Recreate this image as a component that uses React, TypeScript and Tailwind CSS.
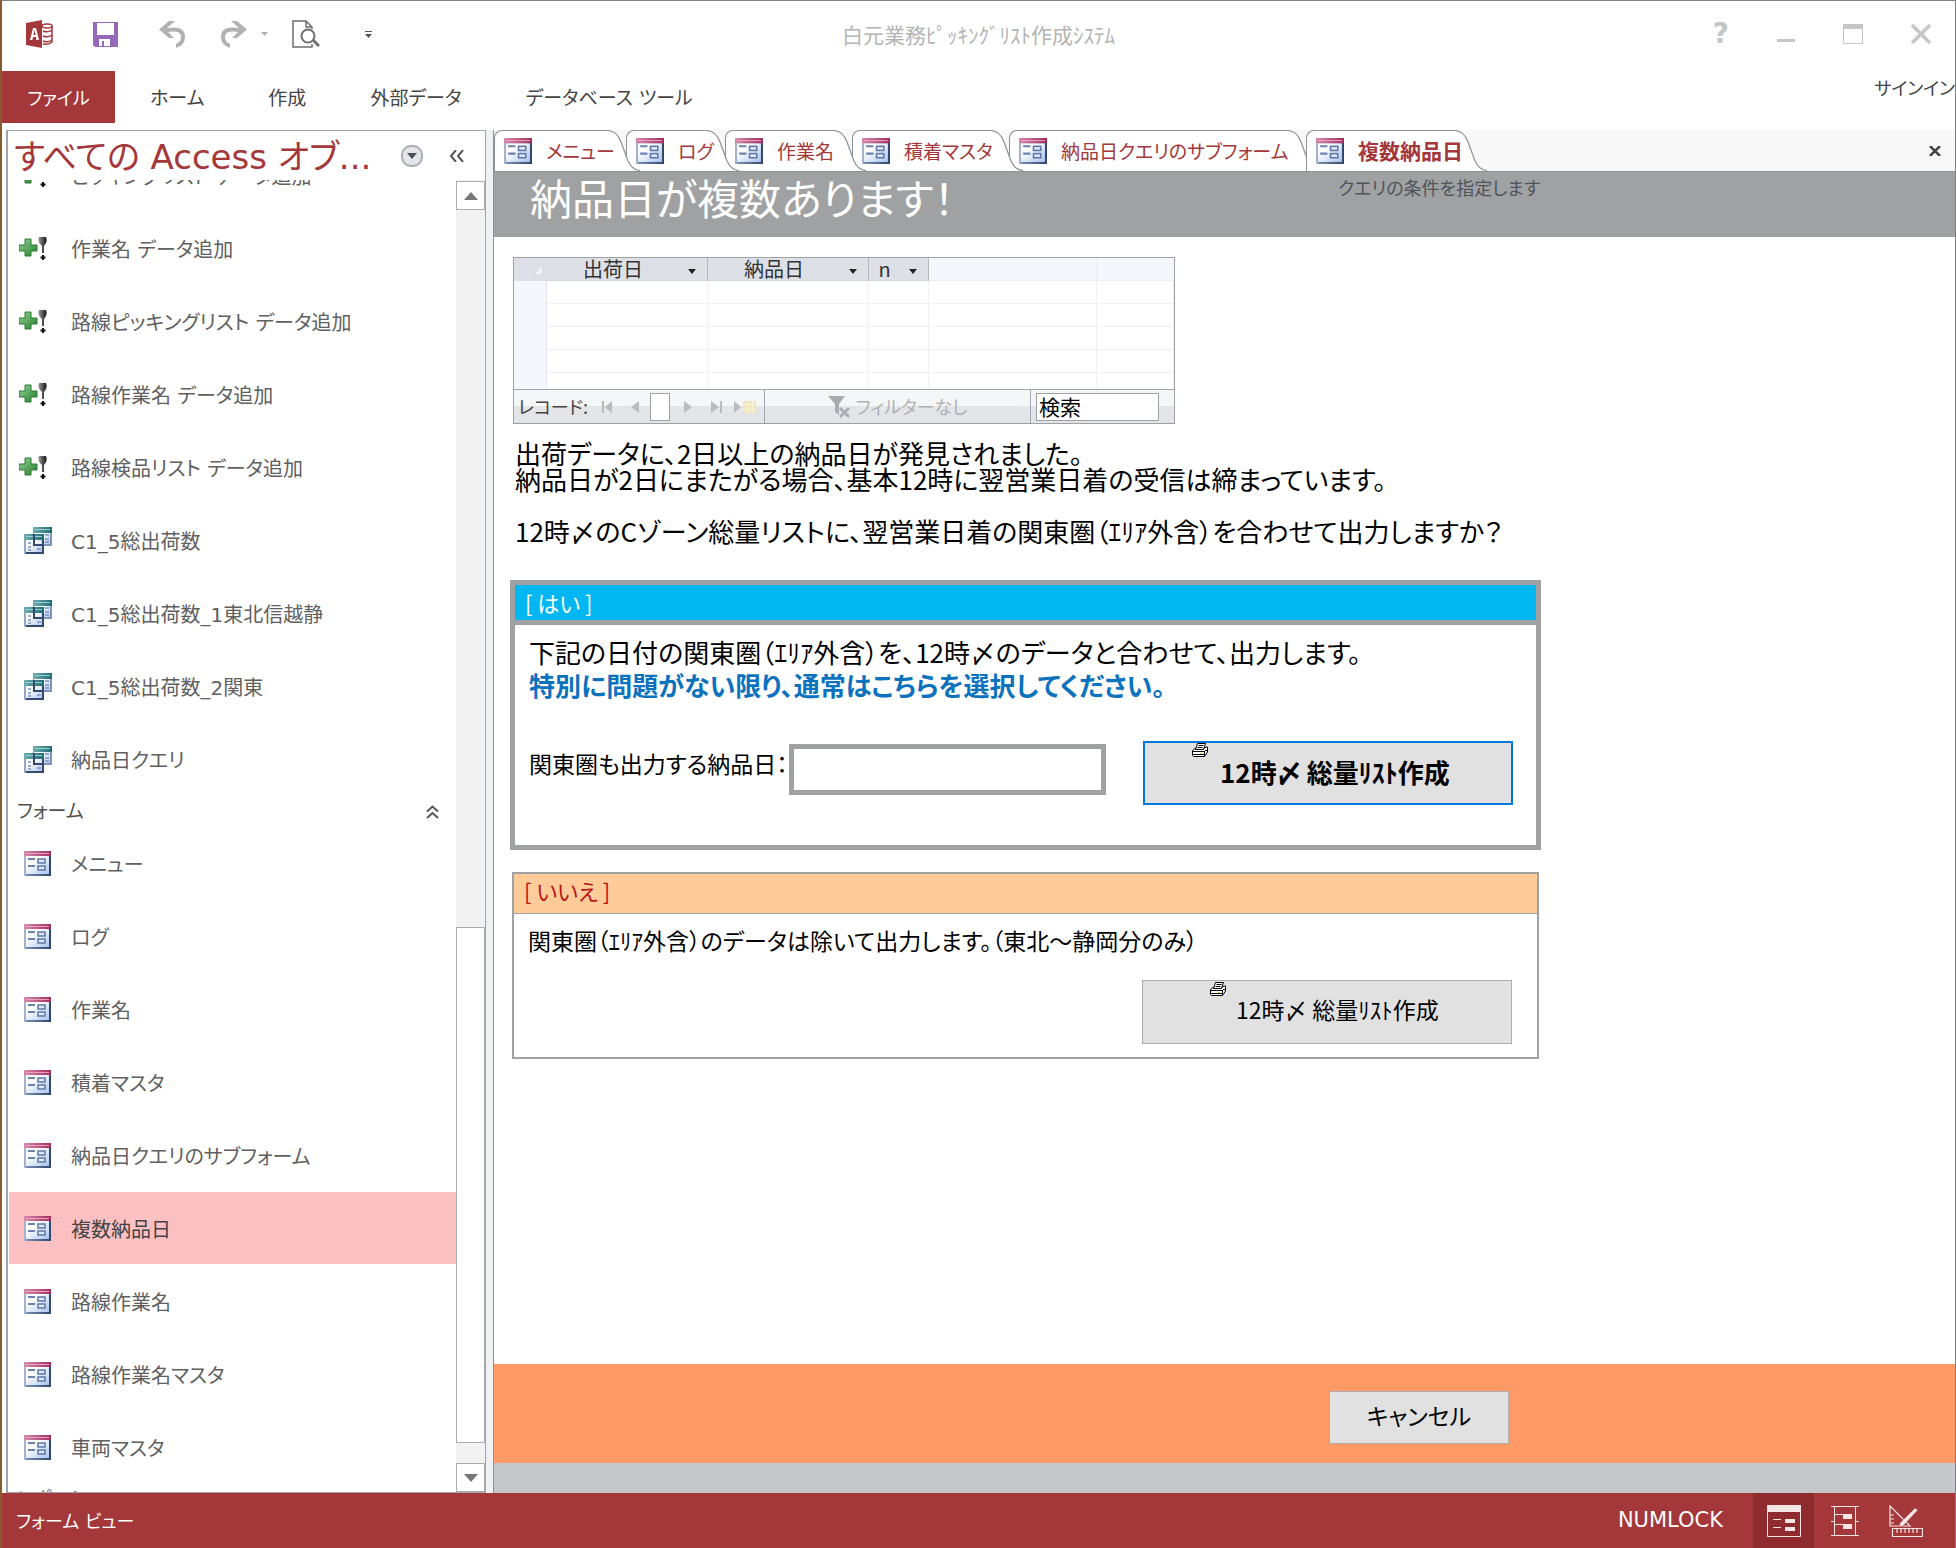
import React from 'react';

type IconKind = 'append' | 'query' | 'form';

const queries: { name: string; icon: IconKind }[] = [
  { name: 'ピッキングリスト データ追加', icon: 'append' },
  { name: '作業名 データ追加', icon: 'append' },
  { name: '路線ピッキングリスト データ追加', icon: 'append' },
  { name: '路線作業名 データ追加', icon: 'append' },
  { name: '路線検品リスト データ追加', icon: 'append' },
  { name: 'C1_5総出荷数', icon: 'query' },
  { name: 'C1_5総出荷数_1東北信越静', icon: 'query' },
  { name: 'C1_5総出荷数_2関東', icon: 'query' },
  { name: '納品日クエリ', icon: 'query' },
];

const forms = [
  'メニュー',
  'ログ',
  '作業名',
  '積着マスタ',
  '納品日クエリのサブフォーム',
  '複数納品日',
  '路線作業名',
  '路線作業名マスタ',
  '車両マスタ',
];

const tabs = [
  { name: 'メニュー', width: 'w-[114px]', z: 'z-[6]' },
  { name: 'ログ', width: 'w-[81px]', z: 'z-[5]' },
  { name: '作業名', width: 'w-[109px]', z: 'z-[4]' },
  { name: '積着マスタ', width: 'w-[139px]', z: 'z-[3]' },
  { name: '納品日クエリのサブフォーム', width: 'w-[279px]', z: 'z-[2]' },
  { name: '複数納品日', width: 'w-[149px]', z: 'z-[7]', active: true },
];

const FormIcon: React.FC<{ className?: string }> = ({ className = 'h-[25px] w-[27px]' }) => (
  <svg className={`shrink-0 ${className}`} viewBox="0 0 27 25" preserveAspectRatio="none">
    <defs>
      <linearGradient id="formBody" x1="0" y1="0" x2="1" y2="1">
        <stop offset="0.3" stopColor="#ffffff" />
        <stop offset="1" stopColor="#a9c3ee" />
      </linearGradient>
      <linearGradient id="formBar" x1="0" y1="0" x2="1" y2="0">
        <stop offset="0" stopColor="#d88aac" />
        <stop offset="1" stopColor="#a32b5e" />
      </linearGradient>
      <linearGradient id="formEdge" x1="0" y1="0" x2="1" y2="0">
        <stop offset="0" stopColor="#7f96bb" />
        <stop offset="1" stopColor="#2f466b" />
      </linearGradient>
    </defs>
    <rect width="27" height="25" fill="url(#formEdge)" />
    <rect width="2" height="25" fill="#a3b3ce" />
    <rect x="2" y="5" width="23" height="18" fill="url(#formBody)" />
    <rect width="27" height="5" fill="url(#formBar)" />
    <rect x="2" y="2" width="23" height="1" fill="#e3a5c0" />
    <path d="M4 8h7M4 15h7" stroke="#6a82ae" strokeWidth="2" />
    <rect x="14" y="8" width="7" height="4" fill="#dfe8f8" stroke="#5f78a6" strokeWidth="1.5" />
    <rect x="14" y="15" width="7" height="4" fill="#dfe8f8" stroke="#5f78a6" strokeWidth="1.5" />
  </svg>
);

const QueryIcon: React.FC = () => (
  <svg className="h-[27px] w-7 shrink-0" viewBox="0 0 28 27">
    <defs>
      <linearGradient id="queryBar" x1="0" y1="0" x2="1" y2="0">
        <stop offset="0" stopColor="#6fb0b3" />
        <stop offset="1" stopColor="#1d6c72" />
      </linearGradient>
      <linearGradient id="queryBody" x1="0" y1="0" x2="1" y2="1">
        <stop offset="0.3" stopColor="#ffffff" />
        <stop offset="1" stopColor="#b3c7ef" />
      </linearGradient>
    </defs>
    <rect x="9" width="19" height="19" fill="#7f93bb" />
    <rect x="10" y="5" width="16" height="12" fill="url(#queryBody)" />
    <rect x="9" width="19" height="6" fill="url(#queryBar)" />
    <path d="M11 2.5h15" stroke="#9fd0d0" />
    <path d="M21 8h4M21 12h4M21 15h4" stroke="#7d93bd" strokeWidth="1.5" />
    <rect y="7" width="20" height="20" fill="#33496f" />
    <rect y="7" width="2" height="20" fill="#93a7c6" />
    <rect x="2" y="12" width="16" height="13" fill="url(#queryBody)" />
    <rect y="7" width="20" height="6" fill="url(#queryBar)" />
    <path d="M2 9.5h16" stroke="#9fd0d0" />
    <path d="M4 16h3M4 20h3M4 23h3M13 22h4" stroke="#7d93bd" strokeWidth="1.5" />
    <path d="M10 7v11h9" fill="none" stroke="#33496f" strokeWidth="2" />
  </svg>
);

const AppendIcon: React.FC = () => (
  <svg className="-ml-[5px] h-6 w-[28px] shrink-0" viewBox="0 0 28 24">
    <defs>
      <linearGradient id="plus" x1="0" y1="0" x2="1" y2="1">
        <stop offset="0" stopColor="#9bd69a" />
        <stop offset="1" stopColor="#1f7a2c" />
      </linearGradient>
      <linearGradient id="bang" x1="0" y1="0" x2="1" y2="0">
        <stop offset="0" stopColor="#9a9a9a" />
        <stop offset="1" stopColor="#111111" />
      </linearGradient>
    </defs>
    <path d="M6 3h6v6h6v6h-6v5H6v-5H0V9h6z" fill="url(#plus)" stroke="#2c7a35" strokeWidth="1" />
    <path d="M20 1h7q2 5-2 9v7h-2v-7q-5-4-3-9z" fill="url(#bang)" />
    <path d="M24 19v5M21.500 21.500h5" stroke="#111" strokeWidth="2" />
  </svg>
);

const PrinterIcon: React.FC = () => (
  <svg className="h-[14px] w-4 shrink-0" viewBox="0 0 16 14" stroke="#000">
    <path d="M1.500 6.500 3 5.500h9l2-1.500h1.500v5l-3 4.500H1.500l-1-1V8z" fill="#fff" />
    <path d="M5.500.500h8l-2 6h-8z" fill="#fff" />
    <path d="M6.500 2.500h5M5.500 4.500h5M1 8.500h11.500M1 11.500h11.500M12.500 8v5M13 7.500h2" fill="none" />
    <path d="M8 10.500h2" stroke="#e0d000" />
  </svg>
);

const icons: Record<IconKind, React.ReactNode> = {
  append: <AppendIcon />,
  query: <QueryIcon />,
  form: <FormIcon />,
};

const NavItem: React.FC<{ name: string; icon: IconKind; selected?: boolean }> = ({ name, icon, selected }) => (
  <li className="h-[73px] pb-px pl-px">
    <button
      className={`flex h-full w-full items-center pl-[15px] text-left whitespace-nowrap ${
        selected ? 'bg-[#fcc0c3] text-[#444]' : 'text-[#606060]'
      }`}
    >
      <span className="flex w-[47px] shrink-0">{icons[icon]}</span>
      <span className="pt-1">{name}</span>
    </button>
  </li>
);

const TitleBar: React.FC = () => (
  <header className="grid h-[70px] shrink-0 grid-cols-[1fr_auto_1fr] items-center">
    <div className="flex items-center pb-1 pl-6">
      <svg className="h-7 w-[27px]" viewBox="0 0 27 28">
        <path d="M0 3 16 0v28L0 25z" fill="#a4373a" />
        <path d="M4 20 7 8h3l3 12h-2.500l-.6-3H7l-.6 3zM7.400 15h2.200L8.500 10z" fill="#fff" />
        <ellipse cx="21" cy="6" rx="5" ry="2" fill="none" stroke="#a4373a" strokeWidth="1.500" />
        <path d="M17 11q5 2 9-1M17 16q5 2 9-1M17 21q5 2 9-1M26 6v16q-3 3-9 2" fill="none" stroke="#a4373a" strokeWidth="1.500" />
      </svg>
      <button aria-label="上書き保存" className="ml-10">
        <svg className="h-[25px] w-[25px]" viewBox="0 0 25 25">
          <path d="M0 0h25v25H2l-2-2z" fill="#9668b8" />
          <path d="M4 1h17v12H4zM6 17h11v7h-6v-5H9v5H6z" fill="#fff" />
        </svg>
      </button>
      <button aria-label="元に戻す" className="ml-[41px]">
        <svg className="h-[27px] w-[27px]" viewBox="0 0 27 27">
          <path d="M10 0h6L8 7q18-3 18 9 0 8-9 11v-4q5-2 5-7 0-7-13-5l6 6h-5L0 8.500z" fill="#b1b1b1" />
        </svg>
      </button>
      <button aria-label="やり直し" className="ml-[34px] flex items-center gap-3.5">
        <svg className="h-[27px] w-[27px] -scale-x-100" viewBox="0 0 27 27">
          <path d="M10 0h6L8 7q18-3 18 9 0 8-9 11v-4q5-2 5-7 0-7-13-5l6 6h-5L0 8.500z" fill="#b1b1b1" />
        </svg>
        <svg className="h-1 w-[7px]" viewBox="0 0 7 4">
          <path d="M0 0h7L3.500 4z" fill="#b1b1b1" />
        </svg>
      </button>
      <button aria-label="印刷プレビュー" className="ml-6">
        <svg className="h-7 w-7" viewBox="0 0 28 28" fill="none" stroke="#6e6e6e">
          <path d="M20 24v3H1V1h13l6 6v2M14 1v6h6" strokeWidth="1.500" />
          <circle cx="16" cy="16" r="6.500" strokeWidth="2" />
          <path d="m21 20 6 6" strokeWidth="3" />
        </svg>
      </button>
      <button aria-label="クイック アクセスのカスタマイズ" className="ml-[45px]">
        <svg className="h-[7px] w-[7px]" viewBox="0 0 7 7">
          <path d="M0 0h7v1H0zM0 3h7L3.500 7z" fill="#555" />
        </svg>
      </button>
    </div>
    <h1 className="pt-0.5 text-[21px] whitespace-nowrap text-[#b4b4b4]">白元業務ﾋﾟｯｷﾝｸﾞﾘｽﾄ作成ｼｽﾃﾑ</h1>
    <div className="flex items-center justify-end gap-12 pr-6 pb-1 text-[#c6c6c6]">
      <button aria-label="ヘルプ" className="text-[28px] leading-7 font-bold">?</button>
      <button aria-label="最小化" className="pt-3">
        <svg className="h-[3px] w-[18px]"><rect width="18" height="3" fill="#c6c6c6" /></svg>
      </button>
      <button aria-label="最大化">
        <svg className="h-5 w-5" viewBox="0 0 20 20">
          <path d="M0 0h20v20H0zM1 5v14h18V5z" fill="#c6c6c6" fillRule="evenodd" />
        </svg>
      </button>
      <button aria-label="閉じる">
        <svg className="h-5 w-5" viewBox="0 0 20 20">
          <path d="M1 1 19 19M19 1 1 19" stroke="#c6c6c6" strokeWidth="3.500" />
        </svg>
      </button>
    </div>
  </header>
);

const Ribbon: React.FC = () => (
  <nav className="flex h-[59px] shrink-0 items-start text-[19px] text-[#444]">
    <button className="h-[52px] w-[113px] bg-[#a4373a] pt-0.5 text-[18px] text-white">ファイル</button>
    <div className="flex h-[52px] items-center gap-16 pt-0.5 pl-[35px]">
      <button>ホーム</button>
      <button>作成</button>
      <button>外部データ</button>
      <button>データベース ツール</button>
    </div>
    <a href="#signin" className="mt-1 ml-auto text-[18px]">サインイン</a>
  </nav>
);

const NavigationPane: React.FC = () => (
  <aside className="ml-1 flex w-[480px] shrink-0 flex-col border border-l-2 border-[#a0a4ad]">
    <div className="flex h-[49px] shrink-0 items-center pr-[21px] pl-1.5">
      <h2 className="truncate pt-1 text-[34px] leading-[45px] text-[#a4373a]">すべての Access オブ...</h2>
      <button aria-label="表示の選択" className="mr-[26px] ml-auto">
        <svg className="h-[22px] w-[22px]" viewBox="0 0 22 22">
          <rect x="1" y="1" width="20" height="20" rx="9" fill="#e4e5e8" stroke="#a9acb3" strokeWidth="2" />
          <path d="M6 8h10l-5 6z" fill="#4c4d5c" />
        </svg>
      </button>
      <button aria-label="ナビゲーションを閉じる">
        <svg className="h-3 w-[15px]" viewBox="0 0 15 12" fill="none" stroke="#555" strokeWidth="2">
          <path d="M7 0 2 6l5 6M14 0 9 6l5 6" />
        </svg>
      </button>
    </div>
    <div className="flex min-h-0 flex-1">
      <div className="min-w-0 flex-1 overflow-hidden text-[20px]">
        <ul className="-mt-[41px]">
          {queries.map((q) => (
            <NavItem key={q.name} name={q.name} icon={q.icon} />
          ))}
        </ul>
        <button className="flex h-[31px] w-full items-center justify-between pr-[17px] pl-[9px] text-[19px] text-[#505050]">
          フォーム
          <svg className="h-[14px] w-[13px]" viewBox="0 0 13 14" fill="none" stroke="#555" strokeWidth="2">
            <path d="m1 6.500 5.500-5 5.500 5M1 13l5.500-5 5.500 5" />
          </svg>
        </button>
        <ul>
          {forms.map((name) => (
            <NavItem key={name} name={name} icon="form" selected={name === '複数納品日'} />
          ))}
        </ul>
        <button className="flex h-[31px] w-full items-center pl-[9px] text-[19px] text-[#505050]">レポート</button>
      </div>
      <div className="flex w-[29px] shrink-0 flex-col bg-[#f2f2f2]">
        <button aria-label="上へ" className="mt-px flex h-[29px] items-center justify-center border border-[#ababab] bg-white">
          <svg className="h-2 w-3.5" viewBox="0 0 14 8"><path d="M7 0l7 8H0z" fill="#777" /></svg>
        </button>
        <div className="grow-[717]" />
        <div className="grow-[514] border border-[#ababab] bg-white" />
        <div className="grow-[20]" />
        <button aria-label="下へ" className="flex h-[29px] items-center justify-center border border-[#ababab] bg-white">
          <svg className="h-2 w-3.5" viewBox="0 0 14 8"><path d="M0 0h14L7 8z" fill="#777" /></svg>
        </button>
      </div>
    </div>
  </aside>
);

const TabStrip: React.FC = () => (
  <div className="flex h-[42px] shrink-0 border-b border-[#8d9197] bg-[#f8f8f8] text-[#a4373a]">
    {tabs.map((t) => (
      <button key={t.name} className={`relative -mr-3.5 flex h-[41px] whitespace-nowrap ${t.z}`}>
        <span
          className={`z-10 flex h-full items-center gap-3.5 rounded-tl-lg border-t border-l border-[#8d9197] bg-white pl-[9px] ${t.width} ${
            t.active ? 'text-[21px] font-bold' : 'text-[19px]'
          }`}
        >
          <FormIcon className="h-[26px] w-7" />
          {t.name}
        </span>
        <svg className="h-[41px] w-8" viewBox="0 0 32 41">
          <path d="M0 0Q9 1 13 12L20 31Q24 40 32 41H0z" fill="#fff" />
          <path d="M0 .5Q9 1 13 12L20 31Q24 40 32 40.500" fill="none" stroke="#8d9197" strokeWidth="1.200" />
        </svg>
      </button>
    ))}
    <button aria-label="タブを閉じる" className="mr-[14px] ml-auto">
      <svg className="h-2.5 w-3" viewBox="0 0 12 10">
        <path d="m1 0 10 10M11 0 1 10" stroke="#444" strokeWidth="2.500" />
      </svg>
    </button>
  </div>
);

const HeaderCell: React.FC<{ label: string }> = ({ label }) => (
  <th className="border-r border-b border-r-[#b4b7be] border-b-[#cdd6e4] bg-[#dde0e6] p-0 font-normal">
    <span className="flex h-[22px] items-center pr-2.5">
      <span className="flex-1 pr-2 text-center text-[20px] leading-5 text-[#333]">{label}</span>
      <svg className="mt-1 h-[5px] w-2.5" viewBox="0 0 10 5"><path d="M1 0h8L5 5z" fill="#222" /></svg>
    </span>
  </th>
);

const Datasheet: React.FC = () => (
  <div className="ml-[3px] flex h-[167px] w-[662px] flex-col border border-[#a0a1a3]">
    <div className="min-h-0 flex-1 overflow-hidden">
      <table className="w-full table-fixed border-separate border-spacing-0">
        <colgroup>
          <col className="w-[33px]" />
          <col className="w-[161px]" />
          <col className="w-[161px]" />
          <col className="w-[60px]" />
          <col className="w-[168px]" />
          <col />
        </colgroup>
        <thead>
          <tr>
            <th className="bg-[#dde0e6] p-0">
              <svg className="ml-[18px] h-3 w-3" viewBox="0 0 12 12"><path d="M11 1v10H1z" fill="#eef1f6" stroke="#cfd6e2" /></svg>
            </th>
            <HeaderCell label="出荷日" />
            <HeaderCell label="納品日" />
            <HeaderCell label="n" />
            <th className="border-r border-b border-[#ebedf3] bg-[#f6f7fd] p-0" />
            <th className="border-b border-[#ebedf3] bg-[#f6f7fd] p-0" />
          </tr>
        </thead>
        <tbody>
          {[0, 1, 2, 3, 4].map((row) => (
            <tr key={row} className="h-[23px]">
              <td className="border-r border-[#e6e8f0] bg-[#f6f7fd] p-0" />
              {[0, 1, 2, 3, 4].map((col) => (
                <td key={col} className="border-r border-b border-[#f0f1f5] p-0" />
              ))}
            </tr>
          ))}
        </tbody>
      </table>
    </div>
    <div className="flex h-[34px] shrink-0 items-center border-t border-[#a0a4ad] bg-linear-to-b from-[#f5f6f8] from-50% to-[#e4e5e9] to-50% text-[18px]">
      <label htmlFor="record" className="w-[75px] pl-1 text-[#444]">レコード:</label>
      <button aria-label="先頭レコード" className="ml-3">
        <svg className="h-3 w-3" viewBox="0 0 12 12"><path d="M1 0h2v12H1zM11 0v12L4 6z" fill="#b9bbc0" /></svg>
      </button>
      <button aria-label="前のレコード" className="ml-[18px]">
        <svg className="h-3 w-2" viewBox="0 0 8 12"><path d="M8 0v12L0 6z" fill="#b9bbc0" /></svg>
      </button>
      <input id="record" className="ml-[11px] h-7 w-5 border border-[#a0a1a3] bg-white" />
      <button aria-label="次のレコード" className="ml-3.5">
        <svg className="h-3 w-2" viewBox="0 0 8 12"><path d="M0 0v12l8-6z" fill="#b9bbc0" /></svg>
      </button>
      <button aria-label="最終レコード" className="ml-[18px]">
        <svg className="h-3 w-3" viewBox="0 0 12 12"><path d="M10 0h2v12h-2zM1 0v12l8-6z" fill="#b9bbc0" /></svg>
      </button>
      <button aria-label="新しいレコード" className="ml-3">
        <svg className="h-3 w-[22px]" viewBox="0 0 22 12">
          <path d="M0 0v12l7-6z" fill="#b9bbc0" />
          <path d="M9 0h13v12H9z" fill="#efe6bd" />
          <path d="M9 3.500h13M9 8.500h13M13.500 0v12M18.500 0v12" stroke="#f8f3da" />
        </svg>
      </button>
      <button className="ml-2 flex h-full w-[267px] items-center justify-center border-x border-[#a0a4ad] text-[#b0b1b5]">
        <svg className="h-[22px] w-6" viewBox="0 0 24 22">
          <path d="M0 0h17l-6 8v11l-4-3V8z" fill="#a9abb0" />
          <path d="m12 12 9 9M21 12l-9 9" stroke="#a9abb0" strokeWidth="2.500" />
        </svg>
        <span className="pl-1">フィルターなし</span>
      </button>
      <input aria-label="検索" defaultValue="検索" className="ml-[5px] h-7 w-[123px] border border-[#a0a1a3] bg-white pl-0.5 text-[21px] text-black" />
    </div>
  </div>
);

const FormBody: React.FC = () => (
  <main className="min-h-0 flex-1 overflow-hidden bg-white pt-5 pl-4 whitespace-nowrap text-black">
    <Datasheet />
    <div className="mt-4 pl-[5px] text-[26px] leading-[26px]">
      <p>出荷データに、2日以上の納品日が発見されました。</p>
      <p>納品日が2日にまたがる場合、基本12時に翌営業日着の受信は締まっています。</p>
      <br />
      <p>12時〆のCゾーン総量リストに、翌営業日着の関東圏（ｴﾘｱ外含）を合わせて出力しますか？</p>
    </div>

    <section className="mt-9 h-[270px] w-[1031px] border-[5px] border-[#a0a1a3]">
      <h3 className="flex h-10 items-center border-b-[5px] border-[#a0a1a3] bg-[#00b7f1] pl-2.5 text-[22px] text-white">[ はい ]</h3>
      <div className="pt-2.5 pl-3.5 text-[26px] leading-[33px]">
        <p>下記の日付の関東圏（ｴﾘｱ外含）を、12時〆のデータと合わせて、出力します。</p>
        <p className="font-bold text-[#0c72be]">特別に問題がない限り、通常はこちらを選択してください。</p>
      </div>
      <div className="mt-10 flex pr-[23px] pl-3.5">
        <label htmlFor="date" className="mt-1.5 w-[260px] text-[23px] leading-8">関東圏も出力する納品日：</label>
        <input id="date" className="mt-[3px] h-[51px] w-[317px] border-[5px] border-[#a0a1a3] bg-white px-2 text-[23px]" />
        <button className="ml-auto flex h-16 w-[370px] border-2 border-[#0078d7] bg-[#e1e1e1] pl-[47px] text-[26px] font-bold">
          <PrinterIcon />
          <span className="self-center pb-1 pl-3">12時〆 総量ﾘｽﾄ作成</span>
        </button>
      </div>
    </section>

    <section className="mt-[22px] ml-0.5 h-[187px] w-[1027px] border-2 border-[#a0a1a3]">
      <h3 className="flex h-10 items-center border-b border-[#a0a1a3] bg-[#ffcb99] pb-1.5 pl-2.5 text-[22px] text-[#b8141a]">[ いいえ ]</h3>
      <p className="pt-2.5 pl-3.5 text-[23px] leading-8">関東圏（ｴﾘｱ外含）のデータは除いて出力します。（東北～静岡分のみ）</p>
      <button className="mt-6 mr-[25px] ml-auto flex h-16 w-[370px] border border-[#adadad] bg-[#e1e1e1] pt-px pl-[67px] text-[23px]">
        <PrinterIcon />
        <span className="self-center pb-1.5 pl-2.5">12時〆 総量ﾘｽﾄ作成</span>
      </button>
    </section>
  </main>
);

const StatusBar: React.FC = () => (
  <footer className="flex h-[55px] shrink-0 items-center bg-[#a4373a] pl-3.5 text-white">
    <span className="pt-0.5 text-[18px]">フォーム ビュー</span>
    <span className="mr-[30px] ml-auto text-[21px]">NUMLOCK</span>
    <button aria-label="フォーム ビュー" className="flex h-full w-[61px] items-center justify-center bg-[#8f2b2e]">
      <svg className="h-8 w-[34px]" viewBox="0 0 34 32">
        <path d="M.5.500h33v31H.5z" fill="none" stroke="#f5e6e6" />
        <path d="M0 0h34v7H0zM18 14h10v4H18zM18 22h10v4H18zM6 14h8v1H6zM6 22h8v1H6z" fill="#f5e6e6" />
      </svg>
    </button>
    <button aria-label="レイアウト ビュー" className="ml-[17px]">
      <svg className="h-[30px] w-7" viewBox="0 0 28 30">
        <path d="M0 .5h28M0 29.500h28M3.500 0v30M24.500 0v30M0 15.500h4M24 15.500h4M4 8.500h9M4 18.500h9" fill="none" stroke="#f5e6e6" />
        <path d="M12 8h9v5h-9zM12 18h9v5h-9z" fill="#f5e6e6" />
      </svg>
    </button>
    <button aria-label="デザイン ビュー" className="mr-8 ml-[30px]">
      <svg className="h-8 w-[34px]" viewBox="0 0 34 32">
        <path d="M1 1v20h20zM1 10h4M1 14h4M1 18h4M3.500 23.500h30v8h-30zM8 24v4M12 24v4M16 24v4M20 24v4M24 24v4M28 24v4" fill="none" stroke="#f5e6e6" strokeWidth="1.200" />
        <path d="M26 3l3 2-15 16-4 1 1-4z" fill="#f5e6e6" stroke="#a4373a" strokeWidth=".5" />
      </svg>
    </button>
  </footer>
);

const App: React.FC = () => {
  return (
    <div className="flex h-screen flex-col overflow-hidden border-t border-r border-l-2 border-t-[#808080] border-r-[#808080] border-l-[#8a5a30] bg-white [font-family:'DejaVu_Sans','Noto_Sans_CJK_JP',sans-serif] [font-feature-settings:'palt']">
      <TitleBar />
      <Ribbon />
      <div className="flex min-h-0 flex-1">
        <NavigationPane />
        <div className="w-2 shrink-0 border-r border-[#8d9197] bg-[#eff1f4]" />
        <div className="flex min-w-0 flex-1 flex-col [font-family:'Noto_Sans_CJK_JP',sans-serif]">
          <TabStrip />
          <div className="flex h-[65px] shrink-0 items-start bg-[#a0a1a3] whitespace-nowrap">
            <h2 className="w-[844px] pl-9 text-[42px] leading-[50px] text-white">納品日が複数あります！</h2>
            <p className="pt-0.5 text-[18px] text-[#4d545e]">クエリの条件を指定します</p>
          </div>
          <FormBody />
          <div className="h-[99px] shrink-0 bg-[#ff9966] pt-[27px] pl-[835px]">
            <button className="h-[53px] w-[180px] border border-[#adadad] bg-[#e1e1e1] pb-1 text-[23px] text-black">キャンセル</button>
          </div>
          <div className="h-[30px] shrink-0 bg-[#c6c7cb]" />
        </div>
      </div>
      <StatusBar />
    </div>
  );
};

export default App;
